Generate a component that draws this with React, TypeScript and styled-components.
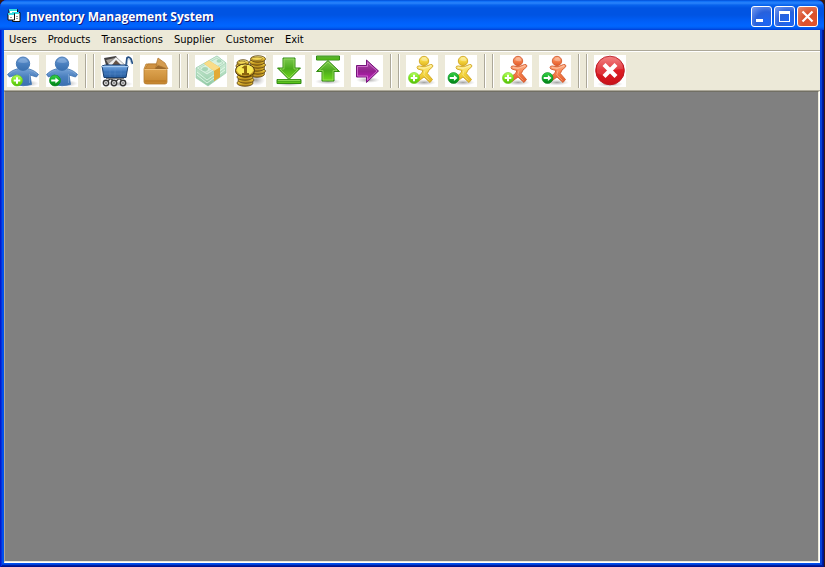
import React from "react";
import styled, { createGlobalStyle, css } from "styled-components";

const GlobalStyle = createGlobalStyle`
  * { box-sizing: border-box; }
  body { margin: 0; background: #3a1a10; }
  button { font: inherit; padding: 0; margin: 0; border: 0; }
`;

const Window = styled.div`
  display: flex;
  flex-direction: column;
  min-height: 100vh;
  margin-right: 1px;
  padding: 0 4px 4px;
  border-radius: 7px 7px 0 0;
  background: #0050ee;
  box-shadow: inset 1px 0 #0019cf, inset -1px 0 #00138c, inset 0 -1px #00138c,
    inset 2px 0 #0831d9, inset -2px 0 #001ea0, inset 0 -2px #001ea0,
    inset -4px 0 #0441d8, inset 0 -3px #0441d8;
`;

const TitleBar = styled.header`
  display: flex;
  align-items: center;
  height: 30px;
  margin: 0 -4px;
  padding: 2px 6px 0 7px;
  border-radius: 7px 7px 0 0;
  background: linear-gradient(
    #0046ce 0, #0b6cf6 1px, #2a84fb 3px, #0864ee 5px, #0054e3 8px,
    #0054e3 15px, #0060fa 22px, #0066ff 26px, #005bf0 28px, #003dd7 30px
  );
`;

const Title = styled.h1`
  flex: 1;
  margin: 0 0 0 5px;
  padding-top: 2px;
  color: #fff;
  font: bold 12px/20px "Trebuchet MS", "Open Sans", sans-serif;
  text-shadow: 1px 1px #0a1883;
  white-space: nowrap;
`;

const Controls = styled.div`
  display: flex;
  gap: 2px;
`;

const ControlButton = styled.button<{ $danger?: boolean }>`
  width: 21px;
  height: 21px;
  border: 1px solid #fff;
  border-radius: 3px;
  ${({ $danger }) =>
    $danger
      ? css`background: radial-gradient(circle at 75% 80%, #e2542d, #d9502c 45%, #e88a6c);`
      : css`background: radial-gradient(circle at 75% 80%, #1c66f4, #2861dc 50%, #7a9df0);`}
  svg { display: block; }
`;

const MenuBar = styled.nav`
  display: flex;
  align-items: flex-start;
  height: 20px;
  background: #ece9d8;
`;

const MenuItem = styled.button`
  height: 19px;
  padding: 0 6px 0 5px;
  background: transparent;
  color: #000;
  font: 11px/19px Tahoma, "DejaVu Sans Condensed", sans-serif;
`;

const Toolbar = styled.div`
  display: flex;
  align-items: center;
  height: 41px;
  padding: 2px 3px 1px;
  border-top: 1px solid #aca899;
  border-bottom: 1px solid #aca899;
  background: #ece9d8;
  box-shadow: inset 0 1px #fff;
`;

const ToolGroup = styled.div`
  display: flex;
  gap: 7px;
`;

const ToolButton = styled.button`
  width: 32px;
  height: 32px;
  background: #fff;
  svg { display: block; }
`;

const Separator = styled.div`
  width: 9px;
  height: 34px;
  margin: 0 7px;
  border: solid #aca899;
  border-width: 0 1px;
  box-shadow: inset 1px 0 #fff, 1px 0 #fff;
`;

const Workspace = styled.main`
  flex: 1;
  background: #808080;
  border: 1px solid;
  border-color: #716f64 #ece9d8 #ece9d8 #aca899;
  box-shadow: 1px 1px #fff;
  margin: 0 1px 1px 0;
`;

const Client = styled.div`
  flex: 1;
  display: flex;
  flex-direction: column;
  background: #ece9d8;
`;

const HiddenDefs = styled.svg`
  position: absolute;
  width: 0;
  height: 0;
`;

const gradients: [string, string, string, string][] = [
  ["blue", "#7ba7da", "#4b80bf", "#3a70b0"],
  ["yellow", "#fff09a", "#f4d53c", "#dfb423"],
  ["orange", "#ffb38a", "#f47d48", "#e25a2a"],
  ["lime", "#b7ff64", "#7be61a", "#52bb0c"],
  ["green", "#3ccf48", "#0cae28", "#057d18"],
  ["leaf", "#7cc850", "#4bab1c", "#70dc1c"],
  ["purple", "#a957a6", "#94208f", "#c91bc5"],
  ["red", "#f27373", "#dd1d24", "#c81219"],
  ["box", "#e4ad5c", "#d59a46", "#c4842e"],
  ["gold", "#fff79a", "#e6bf35", "#9a6c0e"],
  ["cash", "#e0f5e5", "#b9e1c5", "#8fc8a3"],
  ["cart", "#7eb0e8", "#3e77bc", "#2b60a0"],
];

const Gradients = () => (
  <HiddenDefs aria-hidden="true">
    <defs>
      {gradients.map(([id, top, mid, end]) => (
        <linearGradient key={id} id={id} x1="0" y1="0" x2="0" y2="1">
          <stop offset="0" stopColor={top} />
          <stop offset=".5" stopColor={mid} />
          <stop offset="1" stopColor={end} />
        </linearGradient>
      ))}
      <radialGradient id="shade">
        <stop offset="0" stopColor="#666" stopOpacity=".6" />
        <stop offset="1" stopColor="#999" stopOpacity="0" />
      </radialGradient>
    </defs>
  </HiddenDefs>
);

const Icon = ({ children }: { children: React.ReactNode }) => (
  <svg width="32" height="32" viewBox="0 0 32 32" aria-hidden="true">{children}</svg>
);

type BadgeKind = "add" | "go";

const Badge = ({ kind, x, y }: { kind: BadgeKind; x: number; y: number }) => (
  <g transform={`translate(${x} ${y})`}>
    <circle r="5.5" fill={kind === "add" ? "url(#lime)" : "url(#green)"} stroke={kind === "add" ? "#6bcf18" : "#088c1d"} strokeWidth=".6" />
    {kind === "add" ? (
      <path d="M-1-3.3H1V-1H3.3V1H1V3.3H-1V1H-3.3V-1H-1z" fill="#fff" />
    ) : (
      <path d="M-3.8-1H.4V-3L4 0L.4 3V1H-3.8z" fill="#fff" />
    )}
  </g>
);

const UserIcon = ({ kind }: { kind: BadgeKind }) => (
  <Icon>
    <ellipse cx="20" cy="28.5" rx="12" ry="3.5" fill="url(#shade)" />
    <path d="M10 14C13 12.500 19 12.500 22 14C26 15 29 17 31.500 19.500L29.500 22L23 20L24.500 29.500Q16 32 8 29.500L9 20L2.500 22L.5 19.500C3 17 6 15 10 14z" fill="url(#blue)" stroke="#3c72b0" strokeWidth=".8" />
    <path d="M10 15Q5 16 2 19.500M22 15Q27 16 30 19.500M10 19V28M22.500 19V28" fill="none" stroke="#82a9d7" strokeWidth=".7" />
    <circle cx="16" cy="8.700" r="6.700" fill="url(#blue)" stroke="#3c72b0" strokeWidth=".9" />
    <path d="M11 7Q12 3.500 16 3.500T21 7Q17 9 11 7z" fill="#a5c4e8" opacity=".4" />
    <Badge kind={kind} x={kind === "add" ? 10 : 9} y={25.5} />
  </Icon>
);

const RunnerIcon = ({ tone, kind }: { tone: "yellow" | "orange"; kind: BadgeKind }) => {
  const edge = tone === "yellow" ? "#cfa41e" : "#d25a2c";
  return (
    <Icon>
      <ellipse cx="18" cy="27.500" rx="12" ry="3" fill="url(#shade)" />
      <path d="M11.500 11.300Q13 10.500 16 11.500Q20 12 24.500 9.500Q26.500 9 27 11Q26.500 12.500 23 15L21.300 18.500L26.500 24.500L24 27.500L18 22L12 26.500L8 26L9.500 23L15.500 18.500L17 15.500L11.800 14Q10.500 12.500 11.500 11.300z" fill={`url(#${tone})`} stroke={edge} strokeWidth=".9" strokeLinejoin="round" />
      <path d="M13 12.500L18 13.500L25 10.800M19 15.500L17.800 20L23.500 25.500" fill="none" stroke="#fff" strokeOpacity=".4" strokeWidth=".8" />
      <circle cx="18" cy="6" r="4.700" fill={`url(#${tone})`} stroke={edge} strokeWidth=".9" />
      <path d="M15 5Q16 2.300 19 2.500Q22 4 21 6Q18 7 15 5z" fill="#fff" opacity=".3" />
      <Badge kind={kind} x={kind === "add" ? 8 : 8.5} y={23} />
    </Icon>
  );
};

const CartIcon = () => (
  <Icon>
    <ellipse cx="18" cy="29" rx="14" ry="3" fill="url(#shade)" />
    <path d="M3 3L15 1L20 10H5z" fill="#454342" />
    <path d="M5 5L14 3L16 7L8 10z" fill="#a7a19a" />
    <path d="M7 9L15 2L25 11H10z" fill="#eee" stroke="#777" strokeWidth=".6" />
    <path d="M11 10L15 5L21 11z" fill="#655347" />
    <path d="M1 11L4 10H25L27 11L25 22.500H3z" fill="url(#cart)" stroke="#183f70" strokeWidth="1" />
    <path d="M1 11.500H27" stroke="#a5caf1" strokeWidth="1.200" />
    <path d="M3 15H26M3 19H25M9 12V22M14 12V22M20 12V22" fill="none" stroke="#6f9fd8" strokeWidth=".5" opacity=".5" />
    <path d="M25 11L26 3Q28 1 30 4L31.500 9" fill="none" stroke="#244f83" strokeWidth="1.800" />
    <path d="M26 10L27 4Q28 3 29 5L30.500 9" fill="none" stroke="#9fbbd9" strokeWidth=".7" />
    <path d="M5 27L10 23.500L14 28M13 28L18 23.500L23 27" fill="none" stroke="#444" strokeWidth="1.500" />
    <path d="M5 23.500H23" stroke="#777" strokeWidth="1" />
    {[5, 13, 22].map((x) => (
      <g key={x}>
        <circle cx={x} cy="28" r="2.700" fill="#ddd" stroke="#333" strokeWidth="1.400" />
        <circle cx={x} cy="28" r=".8" fill="#444" />
      </g>
    ))}
  </Icon>
);

const BoxIcon = () => (
  <Icon>
    <path d="M6 9H20L27 15V27Q27 29 25 29H7Q4 29 4 27V14z" fill="url(#box)" stroke="#b57d32" strokeWidth=".8" />
    <path d="M5 14L8 9H17L15 14z" fill="#ce9141" stroke="#af7429" strokeWidth=".6" />
    <path d="M16 12L20 9L27 14L15 14z" fill="#9b692c" />
    <path d="M16 10L18 3L25 8L28 14L17 10z" fill="#d49c50" stroke="#b0772f" strokeWidth=".7" />
    <path d="M4.500 14.500H26.500" stroke="#eebf78" />
    <path d="M5 26H26" stroke="#b16f1c" strokeWidth="1" opacity=".7" />
  </Icon>
);

const CashIcon = () => (
  <Icon>
    <path d="M1 13L22 1L31 8V18L13 31L1 23z" fill="url(#cash)" stroke="#99c9a8" strokeWidth=".6" />
    <path d="M1 13L22 1L31 8L12 20z" fill="#d8f0df" stroke="#9cccac" strokeWidth=".6" />
    <path d="M4 13L22 3L28 8L12 17.500z" fill="none" stroke="#a8d7b8" strokeWidth=".7" />
    <ellipse cx="10" cy="14" rx="3" ry="2" fill="#a6d5b6" />
    <ellipse cx="24" cy="6" rx="2.500" ry="1.800" fill="#a6d5b6" />
    <path d="M2 17L12 25L30 12M2 20L12 28L30 15" fill="none" stroke="#f1fff4" strokeWidth=".7" />
    <path d="M9 8.500L14 5.500L25 12.500V22L19 26V16z" fill="#efbd49" />
    <path d="M9 8.500L14 5.500L25 12.500L19 16z" fill="#f9dc88" />
    <path d="M19 16L25 12.500V22L19 26z" fill="#e2aa34" />
  </Icon>
);

const CoinStack = ({ x, y, rx, count }: { x: number; y: number; rx: number; count: number }) => (
  <g stroke="#5c410c" strokeWidth=".8">
    {Array.from({ length: count }, (_, i) => (
      <ellipse key={i} cx={x + (i % 2)} cy={y + (count - i - 1) * 3} rx={rx} ry="3.300" fill="url(#gold)" />
    ))}
    <ellipse cx={x} cy={y - 0.3} rx={rx - 2} ry="1.700" fill="#f4d858" strokeWidth=".5" />
  </g>
);

const CoinsIcon = () => (
  <Icon>
    <ellipse cx="22" cy="25" rx="9" ry="6" fill="url(#shade)" />
    <CoinStack x={23} y={4} rx={7.5} count={6} />
    <CoinStack x={8} y={8} rx={6} count={4} />
    <CoinStack x={11} y={19} rx={8} count={4} />
    <ellipse cx="11" cy="15.500" rx="9.500" ry="6.500" fill="url(#gold)" stroke="#4b3307" />
    <ellipse cx="11" cy="15" rx="8" ry="5.200" fill="#f8e955" />
    <path d="M7.500 13L10.500 10.500H13V18H15V20H8V18H10V13.500z" fill="#8b640c" />
  </Icon>
);

const DownIcon = () => (
  <Icon>
    <ellipse cx="16" cy="28.500" rx="13" ry="3" fill="url(#shade)" />
    <path d="M10 3H22V13H27.500L16 24.500L4.500 13H10z" fill="url(#leaf)" stroke="#338b13" />
    <path d="M11 4H21V14H25L16 23L7 14H11z" fill="none" stroke="#a0df68" strokeWidth=".7" />
    <path d="M4 24.500H28V28.500H4z" fill="url(#leaf)" stroke="#338b13" />
    <path d="M5 25.300H27" stroke="#a1e962" strokeWidth=".7" />
  </Icon>
);

const UpIcon = () => (
  <Icon>
    <ellipse cx="16" cy="26.500" rx="13" ry="3" fill="url(#shade)" />
    <path d="M4.500 1H27.500V5H4.500z" fill="url(#leaf)" stroke="#338b13" />
    <path d="M16 5.500L27.500 16.500H22V26H10V16.500H4.500z" fill="url(#leaf)" stroke="#338b13" />
    <path d="M16 7L25 15.500H21V25H11V15.500H7z" fill="none" stroke="#a0df68" strokeWidth=".7" />
  </Icon>
);

const RightIcon = () => (
  <Icon>
    <ellipse cx="17" cy="25" rx="12" ry="3" fill="url(#shade)" />
    <path d="M5.500 10.500H15.500V5L27.500 16L15.500 27.500V22H5.500z" fill="url(#purple)" stroke="#76147b" />
    <path d="M6.500 11.500H16.500V7.500L26 16L16.500 25V21H6.500z" fill="none" stroke="#d878d4" strokeWidth=".8" />
  </Icon>
);

const ExitIcon = () => (
  <Icon>
    <ellipse cx="16" cy="29" rx="13" ry="3" fill="url(#shade)" />
    <circle cx="16" cy="15.500" r="14.300" fill="url(#red)" stroke="#bd1720" strokeWidth="1" />
    <path d="M3 14A13 13 0 0 1 29 14Q19 14 12 19Q7 21 3 18z" fill="#fff" opacity=".12" />
    <path d="M10 9.500L22 21.500M22 9.500L10 21.500" stroke="#fff" strokeWidth="4.200" />
  </Icon>
);

const FormIcon = () => (
  <svg width="14" height="16" viewBox="0 0 14 16" aria-hidden="true">
    <path d="M2 1.500H10.500V8H2z" fill="#fff" stroke="#111" />
    <path d="M2 1H10V3H2z" fill="#35dce2" />
    <path d="M5.500 4.500H13V13.500H5.500z" fill="#fff" stroke="#111" />
    <path d="M5 4H12V6H5z" fill="#35dce2" />
    <path d="M1 5.500H7.500V12H1z" fill="#fff" stroke="#111" />
    <path d="M1 5H7V7H1z" fill="#35dce2" />
    <path d="M3 9.500H5M9 8.500H11M9 10.500H11" stroke="#999" />
  </svg>
);

const menus = ["Users", "Products", "Transactions", "Supplier", "Customer", "Exit"];

const toolGroups: { label: string; icon: React.ReactNode }[][] = [
  [
    { label: "Add user", icon: <UserIcon kind="add" /> },
    { label: "Open user", icon: <UserIcon kind="go" /> },
  ],
  [
    { label: "Cart", icon: <CartIcon /> },
    { label: "Products", icon: <BoxIcon /> },
  ],
  [
    { label: "Cash", icon: <CashIcon /> },
    { label: "Coins", icon: <CoinsIcon /> },
    { label: "Stock in", icon: <DownIcon /> },
    { label: "Stock out", icon: <UpIcon /> },
    { label: "Transfer", icon: <RightIcon /> },
  ],
  [
    { label: "Add supplier", icon: <RunnerIcon tone="yellow" kind="add" /> },
    { label: "Open supplier", icon: <RunnerIcon tone="yellow" kind="go" /> },
  ],
  [
    { label: "Add customer", icon: <RunnerIcon tone="orange" kind="add" /> },
    { label: "Open customer", icon: <RunnerIcon tone="orange" kind="go" /> },
  ],
  [{ label: "Exit", icon: <ExitIcon /> }],
];

export default function App() {
  return (
    <>
      <GlobalStyle />
      <Gradients />
      <Window>
        <TitleBar>
          <FormIcon />
          <Title>Inventory Management System</Title>
          <Controls>
            <ControlButton aria-label="Minimize">
              <svg width="19" height="19"><path d="M4 12H11V15H4z" fill="#fff" /></svg>
            </ControlButton>
            <ControlButton aria-label="Maximize">
              <svg width="19" height="19"><path d="M4 4H15V15H4zM5 7V14H14V7z" fill="#fff" fillRule="evenodd" /></svg>
            </ControlButton>
            <ControlButton aria-label="Close" $danger>
              <svg width="19" height="19"><path d="M4.500 4.500L14.500 14.500M14.500 4.500L4.500 14.500" stroke="#fff" strokeWidth="2.200" /></svg>
            </ControlButton>
          </Controls>
        </TitleBar>
        <Client>
          <MenuBar aria-label="Main menu">
            {menus.map((name) => <MenuItem key={name}>{name}</MenuItem>)}
          </MenuBar>
          <Toolbar role="toolbar" aria-label="Quick actions">
            {toolGroups.map((group, i) => (
              <React.Fragment key={i}>
                {i > 0 && <Separator />}
                <ToolGroup>
                  {group.map(({ label, icon }) => (
                    <ToolButton key={label} aria-label={label}>{icon}</ToolButton>
                  ))}
                </ToolGroup>
              </React.Fragment>
            ))}
          </Toolbar>
          <Workspace />
        </Client>
      </Window>
    </>
  );
}
